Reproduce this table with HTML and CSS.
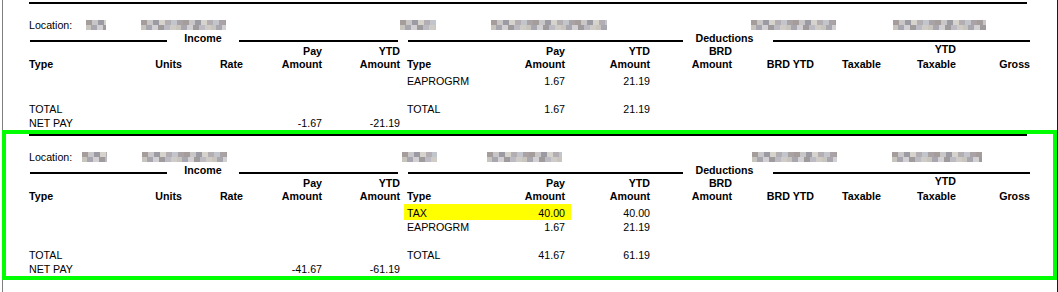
FILE: index.html
```html
<!DOCTYPE html>
<html lang="en">
<head>
<meta charset="utf-8">
<title>Pay detail</title>
<link rel="stylesheet" href="styles.css">
</head>
<body>
<div class="page">
  <section class="block">
    <div class="rule"></div>
    <div class="loc">
      <span class="loc-label">Location:</span>
      <span class="blur b1"></span>
      <span class="blur b2"></span>
      <span class="blur b3"></span>
      <span class="blur b4"></span>
      <span class="blur b5"></span>
      <span class="blur b6"></span>
    </div>
    <div class="sect">
      <span class="line l1"></span><span class="sect-title t-inc">Income</span><span class="line l2"></span>
      <span class="line l3"></span><span class="sect-title t-ded">Deductions</span><span class="line l4"></span>
    </div>
    <div class="grid head">
      <span class="c1">Type</span>
      <span class="c2 r">Units</span>
      <span class="c3 r">Rate</span>
      <span class="c4 r">Pay<br>Amount</span>
      <span class="c5 r">YTD<br>Amount</span>
      <span class="c7">Type</span>
      <span class="c8 r">Pay<br>Amount</span>
      <span class="c9 r">YTD<br>Amount</span>
      <span class="c10 r">BRD<br>Amount</span>
      <span class="c11 r">BRD YTD</span>
      <span class="c12 r">Taxable</span>
      <span class="c13 r ytdtax"><span class="up">YTD</span>Taxable</span>
      <span class="c14 r">Gross</span>
    </div>
    <div class="rows">
      <div class="grid row"><span class="c7">EAPROGRM</span><span class="c8 r">1.67</span><span class="c9 r">21.19</span></div>
      <div class="grid row"></div>
      <div class="grid row"><span class="c1">TOTAL</span><span class="c7">TOTAL</span><span class="c8 r">1.67</span><span class="c9 r">21.19</span></div>
      <div class="grid row"><span class="c1">NET PAY</span><span class="c4 r">-1.67</span><span class="c5 r">-21.19</span></div>
    </div>
  </section>

  <section class="block selected">
    <div class="rule"></div>
    <div class="loc">
      <span class="loc-label">Location:</span>
      <span class="blur b1"></span>
      <span class="blur b2"></span>
      <span class="blur b3"></span>
      <span class="blur b4"></span>
      <span class="blur b5"></span>
      <span class="blur b6"></span>
    </div>
    <div class="sect">
      <span class="line l1"></span><span class="sect-title t-inc">Income</span><span class="line l2"></span>
      <span class="line l3"></span><span class="sect-title t-ded">Deductions</span><span class="line l4"></span>
    </div>
    <div class="grid head">
      <span class="c1">Type</span>
      <span class="c2 r">Units</span>
      <span class="c3 r">Rate</span>
      <span class="c4 r">Pay<br>Amount</span>
      <span class="c5 r">YTD<br>Amount</span>
      <span class="c7">Type</span>
      <span class="c8 r">Pay<br>Amount</span>
      <span class="c9 r">YTD<br>Amount</span>
      <span class="c10 r">BRD<br>Amount</span>
      <span class="c11 r">BRD YTD</span>
      <span class="c12 r">Taxable</span>
      <span class="c13 r ytdtax"><span class="up">YTD</span>Taxable</span>
      <span class="c14 r">Gross</span>
    </div>
    <div class="rows">
      <div class="grid row"><span class="c7 hl">TAX</span><span class="c8 r hl">40.00</span><span class="c9 r">40.00</span></div>
      <div class="grid row"><span class="c7">EAPROGRM</span><span class="c8 r">1.67</span><span class="c9 r">21.19</span></div>
      <div class="grid row"></div>
      <div class="grid row"><span class="c1">TOTAL</span><span class="c7">TOTAL</span><span class="c8 r">41.67</span><span class="c9 r">61.19</span></div>
      <div class="grid row"><span class="c1">NET PAY</span><span class="c4 r">-41.67</span><span class="c5 r">-61.19</span></div>
    </div>
  </section>
</div>
</body>
</html>
```

FILE: styles.css
```css
html, body {
  margin: 0;
  padding: 0;
  background: #ffffff;
}

body {
  font-family: "Liberation Sans", Arial, sans-serif;
  font-size: 10.667px;
  color: #000000;
}

.page {
  margin-left: 2px;
  width: 1054px;
  min-height: 292px;
  border-left: 1px solid #808080;
  border-right: 1px solid #1a1a1a;
  padding-top: 2px;
  box-sizing: content-box;
}

.block {
  margin-left: 3px;
  width: 1047px;
  padding-left: 23px;
  padding-bottom: 4px;
  box-sizing: border-box;
}

.block.selected {
  padding-bottom: 0;
  outline: 4px solid #00ff00;
}

.rule {
  width: 998px;
  height: 2px;
  background: #000000;
}

/* Location line */
.loc {
  display: flex;
  align-items: flex-start;
  margin-top: 14px;
  height: 14px;
  line-height: 14px;
}

.loc-label {
  width: 57px;
  flex: none;
}

.blur {
  flex: none;
  height: 10px;
  margin-top: 2px;
  background-image:
    repeating-linear-gradient(90deg, #a49d9c 0 6px, #c9c6c8 6px 12px, #9c9aa3 12px 18px, #d6d2cc 18px 24px, #b3aeb1 24px 30px, #c2c5cc 30px 36px, #a9a3a6 36px 42px),
    repeating-linear-gradient(90deg, #c8c4be 0 5px, #a8a7b0 5px 11px, #d2d0d2 11px 17px, #9f9a9c 17px 23px, #bcbac2 23px 29px, #cfccc8 29px 35px);
  background-size: 100% 5px, 100% 5px;
  background-position: 0 0, 0 5px;
  background-repeat: no-repeat;
}

.b1 { width: 20px; margin-left: 0; }
.b2 { width: 85px; margin-left: 35px; }
.b3 { width: 36px; margin-left: 174px; }
.b4 { width: 116px; margin-left: 55px; }
.b5 { width: 85px; margin-left: 144px; }
.b6 { width: 93px; margin-left: 57px; }

.selected .b1 { width: 25px; margin-left: -4px; }
.selected .b2 { margin-left: 35px; }
.selected .b3 { width: 35px; margin-left: 175px; }
.selected .b4 { width: 75px; margin-left: 50px; }
.selected .b5 { margin-left: 190px; }
.selected .b6 { width: 90px; margin-left: 55px; }

/* Section headings */
.sect {
  display: flex;
  align-items: flex-start;
  height: 12px;
  line-height: 12px;
  font-weight: bold;
}

.line {
  flex: none;
  height: 2px;
  margin-top: 8px;
  background: #000000;
}

.l1 { margin-left: 1px; width: 137px; }
.l2 { width: 159px; }
.l3 { margin-left: 10px; width: 275px; }
.l4 { width: 257px; }

.sect-title {
  flex: none;
  text-align: center;
  white-space: nowrap;
}

.t-inc { width: 72px; }
.t-ded { width: 83px; padding-right: 7px; }

/* Column grid */
.grid {
  display: grid;
  grid-template-columns: 101px 52px 61px 79px 78px 4px 86px 81px 79px 82px 82px 67px 75px 74px;
}

.head {
  margin-top: 1px;
  height: 26px;
  grid-template-rows: 26px;
  line-height: 13px;
  font-weight: bold;
}

.head > span {
  align-self: end;
  white-space: nowrap;
}

.ytdtax .up {
  display: block;
  margin-bottom: 2px;
}

.rows {
  margin-top: 3px;
}

.row {
  height: 14px;
  line-height: 14px;
  grid-template-rows: 14px;
}

.row > span {
  white-space: nowrap;
}

.r { text-align: right; }

.c1 { grid-column: 1; }
.c2 { grid-column: 2; }
.c3 { grid-column: 3; }
.c4 { grid-column: 4; }
.c5 { grid-column: 5; }
.c7 { grid-column: 7; padding-left: 3px; }
.c8 { grid-column: 8; padding-right: 6px; }
.c9 { grid-column: 9; }
.c10 { grid-column: 10; }
.c11 { grid-column: 11; }
.c12 { grid-column: 12; }
.c13 { grid-column: 13; }
.c14 { grid-column: 14; }

.hl {
  background: #ffff00;
  box-shadow: 0 -2px 0 #ffff00;
}
```
